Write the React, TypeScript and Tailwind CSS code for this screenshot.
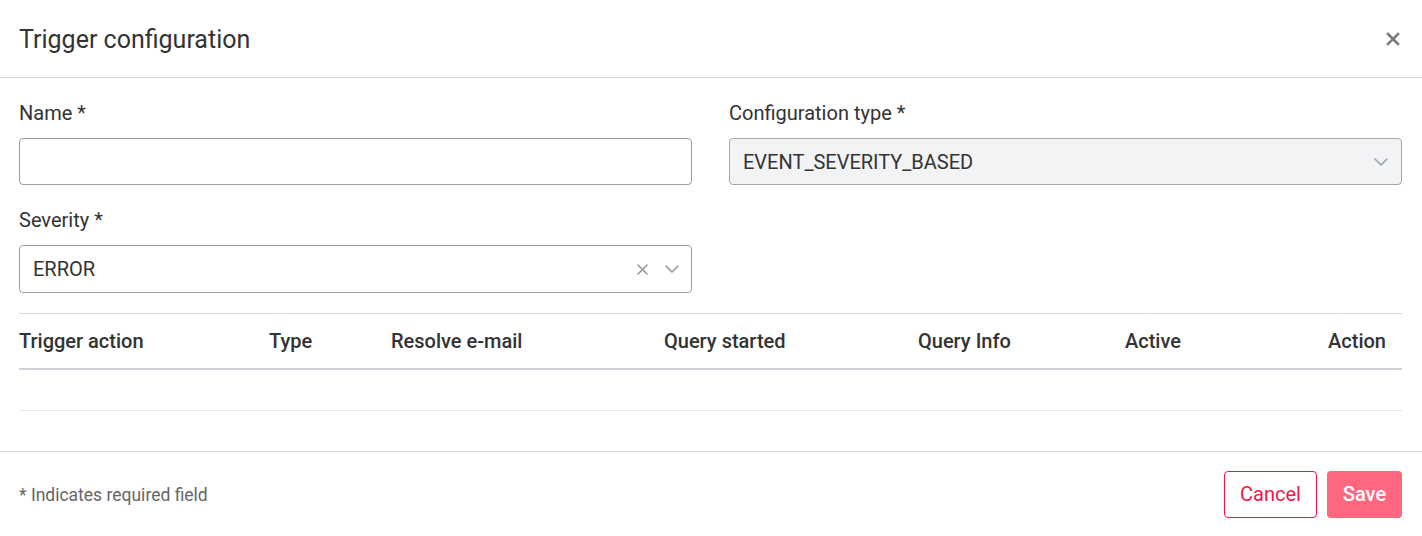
import React from "react";

const Chevron = ({ color = "#9a9ea6" }: { color?: string }) => (
  <svg width="14" height="8" viewBox="0 0 14 8" fill="none">
    <path d="M1 1l6 6 6-6" stroke={color} strokeWidth="1.5" strokeLinecap="round" strokeLinejoin="round" />
  </svg>
);

const SmallX = () => (
  <svg width="11" height="11" viewBox="0 0 11 11" fill="none">
    <path d="M1 1l9 9M10 1l-9 9" stroke="#8f939b" strokeWidth="1.5" strokeLinecap="round" />
  </svg>
);

export default function App() {
  return (
    <div
      className="w-[1422px] h-[536px] bg-white text-[#333333] flex flex-col overflow-hidden"
      style={{ fontFamily: "Roboto, 'Liberation Sans', sans-serif" }}
    >
      {/* Header */}
      <div className="h-[78px] shrink-0 border-b border-[#d4d4d8] flex items-center justify-between pl-[19px] pr-[22px]">
        <h1 className="text-[25px] leading-8 text-[#333333] pt-[2px]">Trigger configuration</h1>
        <button className="text-[#777777] pt-[1px]">
          <svg width="14" height="14" viewBox="0 0 14 14" fill="none">
            <path d="M2 2l10 10M12 2L2 12" stroke="#7a7a7a" strokeWidth="2.6" strokeLinecap="square" />
          </svg>
        </button>
      </div>

      {/* Body */}
      <div className="flex-1 pl-[19px] pr-[20px] pt-[23px]">
        <div className="grid grid-cols-2 gap-x-[37px]">
          <div>
            <label className="block h-6 leading-6 text-[20px] mb-[13px]">Name *</label>
            <input className="w-full h-[47px] border border-[#9e9e9e] rounded-[4px] px-[13px] text-[20px] outline-none" />
          </div>
          <div>
            <label className="block h-6 leading-6 text-[20px] mb-[13px]">Configuration type *</label>
            <div className="w-full h-[47px] border border-[#a8a8a8] rounded-[4px] bg-[#f2f3f5] pl-[13px] pr-[13px] flex items-center justify-between">
              <span className="text-[20px] text-[#333333]">EVENT_SEVERITY_BASED</span>
              <Chevron />
            </div>
          </div>
          <div className="mt-[23px]">
            <label className="block h-6 leading-6 text-[20px] mb-[13px]">Severity *</label>
            <div className="w-full h-[48px] border border-[#9e9e9e] rounded-[4px] pl-[13px] pr-[12px] flex items-center justify-between">
              <span className="text-[20px] text-[#333333]">ERROR</span>
              <div className="flex items-center gap-[17px]">
                <SmallX />
                <Chevron color="#8f939b" />
              </div>
            </div>
          </div>
        </div>

        {/* Table */}
        <div className="mt-[20px] border-t border-[#d5d8de]">
          <div className="grid grid-cols-[250px_122px_273px_254px_207px_1fr] h-[56px] items-center border-b-2 border-[#cdd1d9] text-[20px] font-medium text-[#333333]">
            <div>Trigger action</div>
            <div>Type</div>
            <div>Resolve e-mail</div>
            <div>Query started</div>
            <div>Query Info</div>
            <div className="flex justify-between pr-[16px]">
              <span>Active</span>
              <span>Action</span>
            </div>
          </div>
          <div className="h-[41px] border-b border-[#e5e7eb]" />
        </div>
      </div>

      {/* Footer */}
      <div className="h-[85px] shrink-0 border-t border-[#d4d4d8] flex items-center justify-between pl-[19px] pr-[20px]">
        <span className="text-[17.5px] text-[#666666] pt-[3px]">* Indicates required field</span>
        <div className="flex items-center gap-[10px]">
          <button className="h-[47px] w-[93px] border border-[#f0164a] rounded-[4px] text-[#f0164a] text-[20px] bg-white">
            Cancel
          </button>
          <button className="h-[47px] w-[75px] rounded-[4px] bg-[#ff6781] text-white text-[20px] font-medium">
            Save
          </button>
        </div>
      </div>
    </div>
  );
}
